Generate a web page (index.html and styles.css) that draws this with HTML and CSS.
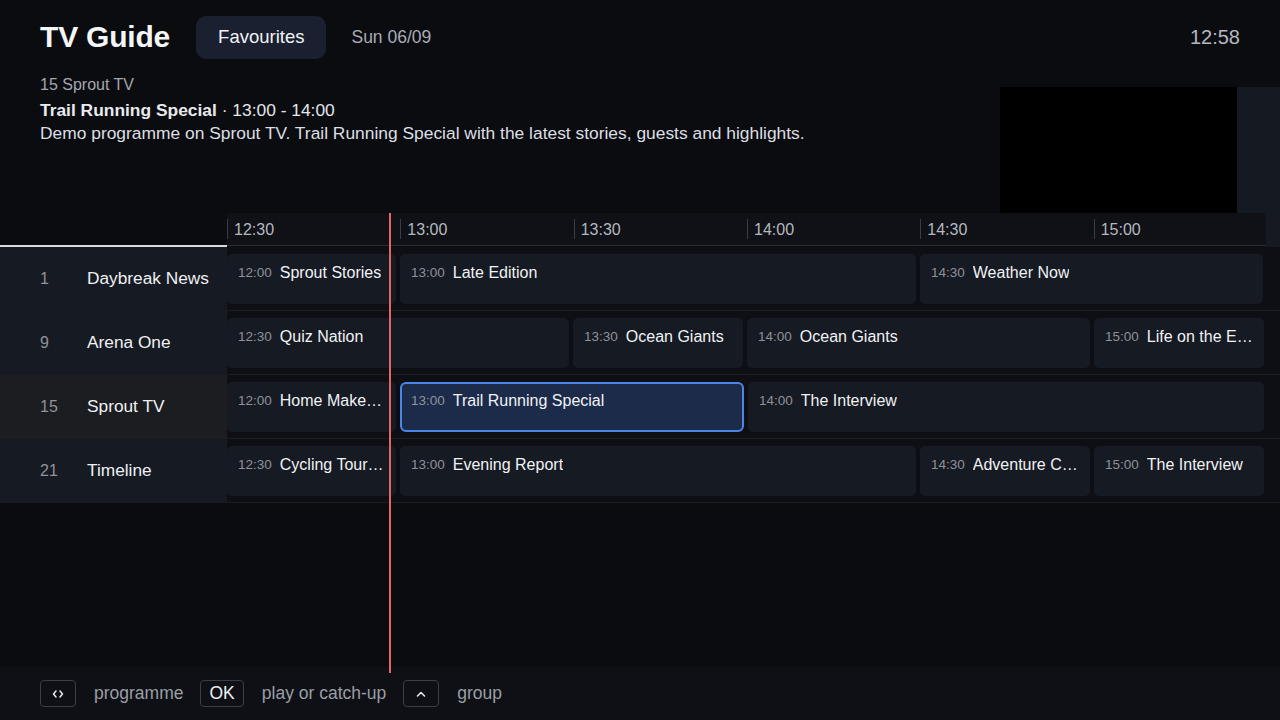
FILE: index.html
```html
<!DOCTYPE html>
<html lang="en">
<head>
<meta charset="utf-8">
<title>TV Guide</title>
<link rel="stylesheet" href="styles.css">
</head>
<body>
<div class="app">
  <header class="topbar">
    <h1 class="brand">TV Guide</h1>
    <div class="pill">Favourites</div>
    <div class="date">Sun 06/09</div>
    <div class="clock">12:58</div>
  </header>

  <section class="info">
    <div class="info-text">
      <div class="info-channel">15 Sprout TV</div>
      <div class="info-title"><b>Trail Running Special</b> · 13:00 - 14:00</div>
      <div class="info-desc">Demo programme on Sprout TV. Trail Running Special with the latest stories, guests and highlights.</div>
    </div>
    <div class="preview"></div>
    <div class="side-strip"></div>
  </section>

  <section class="guide">
    <div class="time-head">
      <div class="corner"></div>
      <div class="ticks">
        <div class="tick">12:30</div>
        <div class="tick">13:00</div>
        <div class="tick">13:30</div>
        <div class="tick">14:00</div>
        <div class="tick">14:30</div>
        <div class="tick">15:00</div>
      </div>
      <div class="head-strip"></div>
    </div>

    <div class="row">
      <div class="chan"><span class="num">1</span><span class="name">Daybreak News</span></div>
      <div class="progs">
        <div class="prog" style="width:169px"><span class="t">12:00</span><span class="title">Sprout Stories</span></div>
        <div class="prog" style="width:516px"><span class="t">13:00</span><span class="title">Late Edition</span></div>
        <div class="prog" style="width:343px"><span class="t">14:30</span><span class="title">Weather Now</span></div>
      </div>
    </div>

    <div class="row">
      <div class="chan"><span class="num">9</span><span class="name">Arena One</span></div>
      <div class="progs">
        <div class="prog" style="width:342px"><span class="t">12:30</span><span class="title">Quiz Nation</span></div>
        <div class="prog" style="width:170px"><span class="t">13:30</span><span class="title">Ocean Giants</span></div>
        <div class="prog" style="width:343px"><span class="t">14:00</span><span class="title">Ocean Giants</span></div>
        <div class="prog" style="width:170px"><span class="t">15:00</span><span class="title">Life on the Edge</span></div>
      </div>
    </div>

    <div class="row row-active">
      <div class="chan"><span class="num">15</span><span class="name">Sprout TV</span></div>
      <div class="progs">
        <div class="prog" style="width:169px"><span class="t">12:00</span><span class="title">Home Makeover</span></div>
        <div class="prog prog-focus" style="width:344px"><span class="t">13:00</span><span class="title">Trail Running Special</span></div>
        <div class="prog" style="width:516px"><span class="t">14:00</span><span class="title">The Interview</span></div>
      </div>
    </div>

    <div class="row">
      <div class="chan"><span class="num">21</span><span class="name">Timeline</span></div>
      <div class="progs">
        <div class="prog" style="width:169px"><span class="t">12:30</span><span class="title">Cycling Tour Highlights</span></div>
        <div class="prog" style="width:516px"><span class="t">13:00</span><span class="title">Evening Report</span></div>
        <div class="prog" style="width:170px"><span class="t">14:30</span><span class="title">Adventure Camp</span></div>
        <div class="prog" style="width:170px"><span class="t">15:00</span><span class="title">The Interview</span></div>
      </div>
    </div>

    <div class="now-line" style="left:389px"></div>
  </section>

  <footer class="footer">
    <span class="key key-icon">
      <svg width="12" height="10" viewBox="0 0 12 10"><path d="M4 2 L1.5 5 L4 8 M8 2 L10.5 5 L8 8" fill="none" stroke="#e6e8eb" stroke-width="1.5" stroke-linecap="round" stroke-linejoin="round"/></svg>
    </span>
    <span class="hint">programme</span>
    <span class="key">OK</span>
    <span class="hint">play or catch-up</span>
    <span class="key key-icon">
      <svg width="12" height="10" viewBox="0 0 12 10"><path d="M2.5 7 L6 3.5 L9.5 7" fill="none" stroke="#e6e8eb" stroke-width="1.6" stroke-linecap="round" stroke-linejoin="round"/></svg>
    </span>
    <span class="hint">group</span>
  </footer>
</div>
</body>
</html>
```

FILE: styles.css
```css
* { box-sizing: border-box; }

html, body {
  margin: 0;
  padding: 0;
  background: #0b0c10;
}

body {
  font-family: "Liberation Sans", Arial, sans-serif;
  color: #eef0f3;
}

.app {
  width: 1280px;
  height: 720px;
  display: flex;
  flex-direction: column;
  overflow: hidden;
  background: #0b0c10;
}

/* top bar */
.topbar {
  height: 74px;
  display: flex;
  align-items: center;
  padding: 0 40px;
}

.brand {
  margin: 0;
  font-size: 30px;
  font-weight: 700;
  color: #f4f5f7;
  letter-spacing: -0.2px;
}

.pill {
  margin-left: 26px;
  height: 43px;
  padding: 0 22px;
  display: flex;
  align-items: center;
  background: #1a2030;
  border-radius: 10px;
  font-size: 18.5px;
  color: #f1f3f6;
}

.date {
  margin-left: 25px;
  font-size: 17.5px;
  color: #a9adb5;
}

.clock {
  margin-left: auto;
  font-size: 20px;
  color: #b4b8c0;
}

/* info */
.info {
  height: 139px;
  display: flex;
  align-items: flex-start;
}

.info-text {
  flex: 1;
  padding-left: 40px;
}

.info-channel {
  font-size: 16px;
  line-height: 22px;
  color: #a3a7af;
}

.info-title {
  margin-top: 2px;
  font-size: 17.4px;
  line-height: 24px;
  color: #e4e6ea;
}

.info-title b {
  color: #e8eaee;
}

.info-desc {
  font-size: 17.4px;
  line-height: 22px;
  color: #dcdfe3;
}

.preview {
  margin-top: 13px;
  width: 237px;
  height: 126px;
  background: #000000;
}

.side-strip {
  margin-top: 13px;
  width: 43px;
  height: 126px;
  background: #151922;
}

/* guide */
.guide {
  position: relative;
  flex: 1;
  display: flex;
  flex-direction: column;
}

.time-head {
  height: 34px;
  display: flex;
}

.corner {
  width: 227px;
  border-bottom: 2px solid #d9dadc;
}

.ticks {
  width: 1039px;
  display: flex;
  background: #0f1116;
  border-bottom: 1px solid #2b2e35;
  margin-bottom: 1px;
}

.tick {
  width: 173.33px;
  flex: none;
  position: relative;
  padding-left: 7px;
  padding-top: 7px;
  font-size: 16px;
  line-height: 20px;
  color: #b4b8bf;
}

.tick::before {
  content: "";
  position: absolute;
  left: 0;
  top: 6px;
  height: 20px;
  width: 1px;
  background: #3a3d44;
}

.head-strip {
  width: 14px;
  background: #151922;
}

.row {
  height: 64px;
  display: flex;
}

.chan {
  width: 227px;
  flex: none;
  display: flex;
  align-items: center;
  padding-left: 40px;
  padding-bottom: 1px;
  background: #161a22;
}

.row-active .chan {
  background: #1b1d21;
}

.num {
  width: 47px;
  font-size: 16px;
  color: #8f949c;
}

.name {
  font-size: 17.3px;
  color: #eef0f3;
}

.progs {
  flex: 1;
  display: flex;
  gap: 4px;
  padding: 7px 0 6px;
  background: #0d0f14;
  border-bottom: 1px solid #1a1d24;
}

.prog {
  flex: none;
  height: 50px;
  display: flex;
  align-items: flex-start;
  padding: 9px 10px 0 11px;
  background: #161a22;
  border-radius: 5px;
  white-space: nowrap;
  overflow: hidden;
}

.prog .t {
  font-size: 13.5px;
  line-height: 19px;
  color: #8d9299;
  margin-right: 8px;
  flex: none;
}

.prog .title {
  font-size: 16px;
  line-height: 19px;
  color: #f0f2f5;
  overflow: hidden;
  text-overflow: ellipsis;
  min-width: 0;
}

.prog-focus {
  background: #1c2b4a;
  border: 2px solid #4a86e6;
  border-radius: 6px;
  padding: 7px 9px 0;
}

.now-line {
  position: absolute;
  top: 0;
  bottom: -6px;
  width: 2px;
  background: #e0676a;
  z-index: 2;
}

/* footer */
.footer {
  height: 53px;
  display: flex;
  align-items: center;
  padding: 0 40px;
  background: #0e1015;
}

.key {
  height: 27px;
  min-width: 36px;
  padding: 0 8px;
  display: flex;
  align-items: center;
  justify-content: center;
  border: 1px solid #3a3e46;
  border-radius: 4px;
  font-size: 17.5px;
  color: #eef0f3;
}

.key-icon {
  width: 36px;
  padding: 0;
}

.hint {
  margin: 0 17px 0 18px;
  font-size: 17.5px;
  color: #9a9ea6;
}
```
